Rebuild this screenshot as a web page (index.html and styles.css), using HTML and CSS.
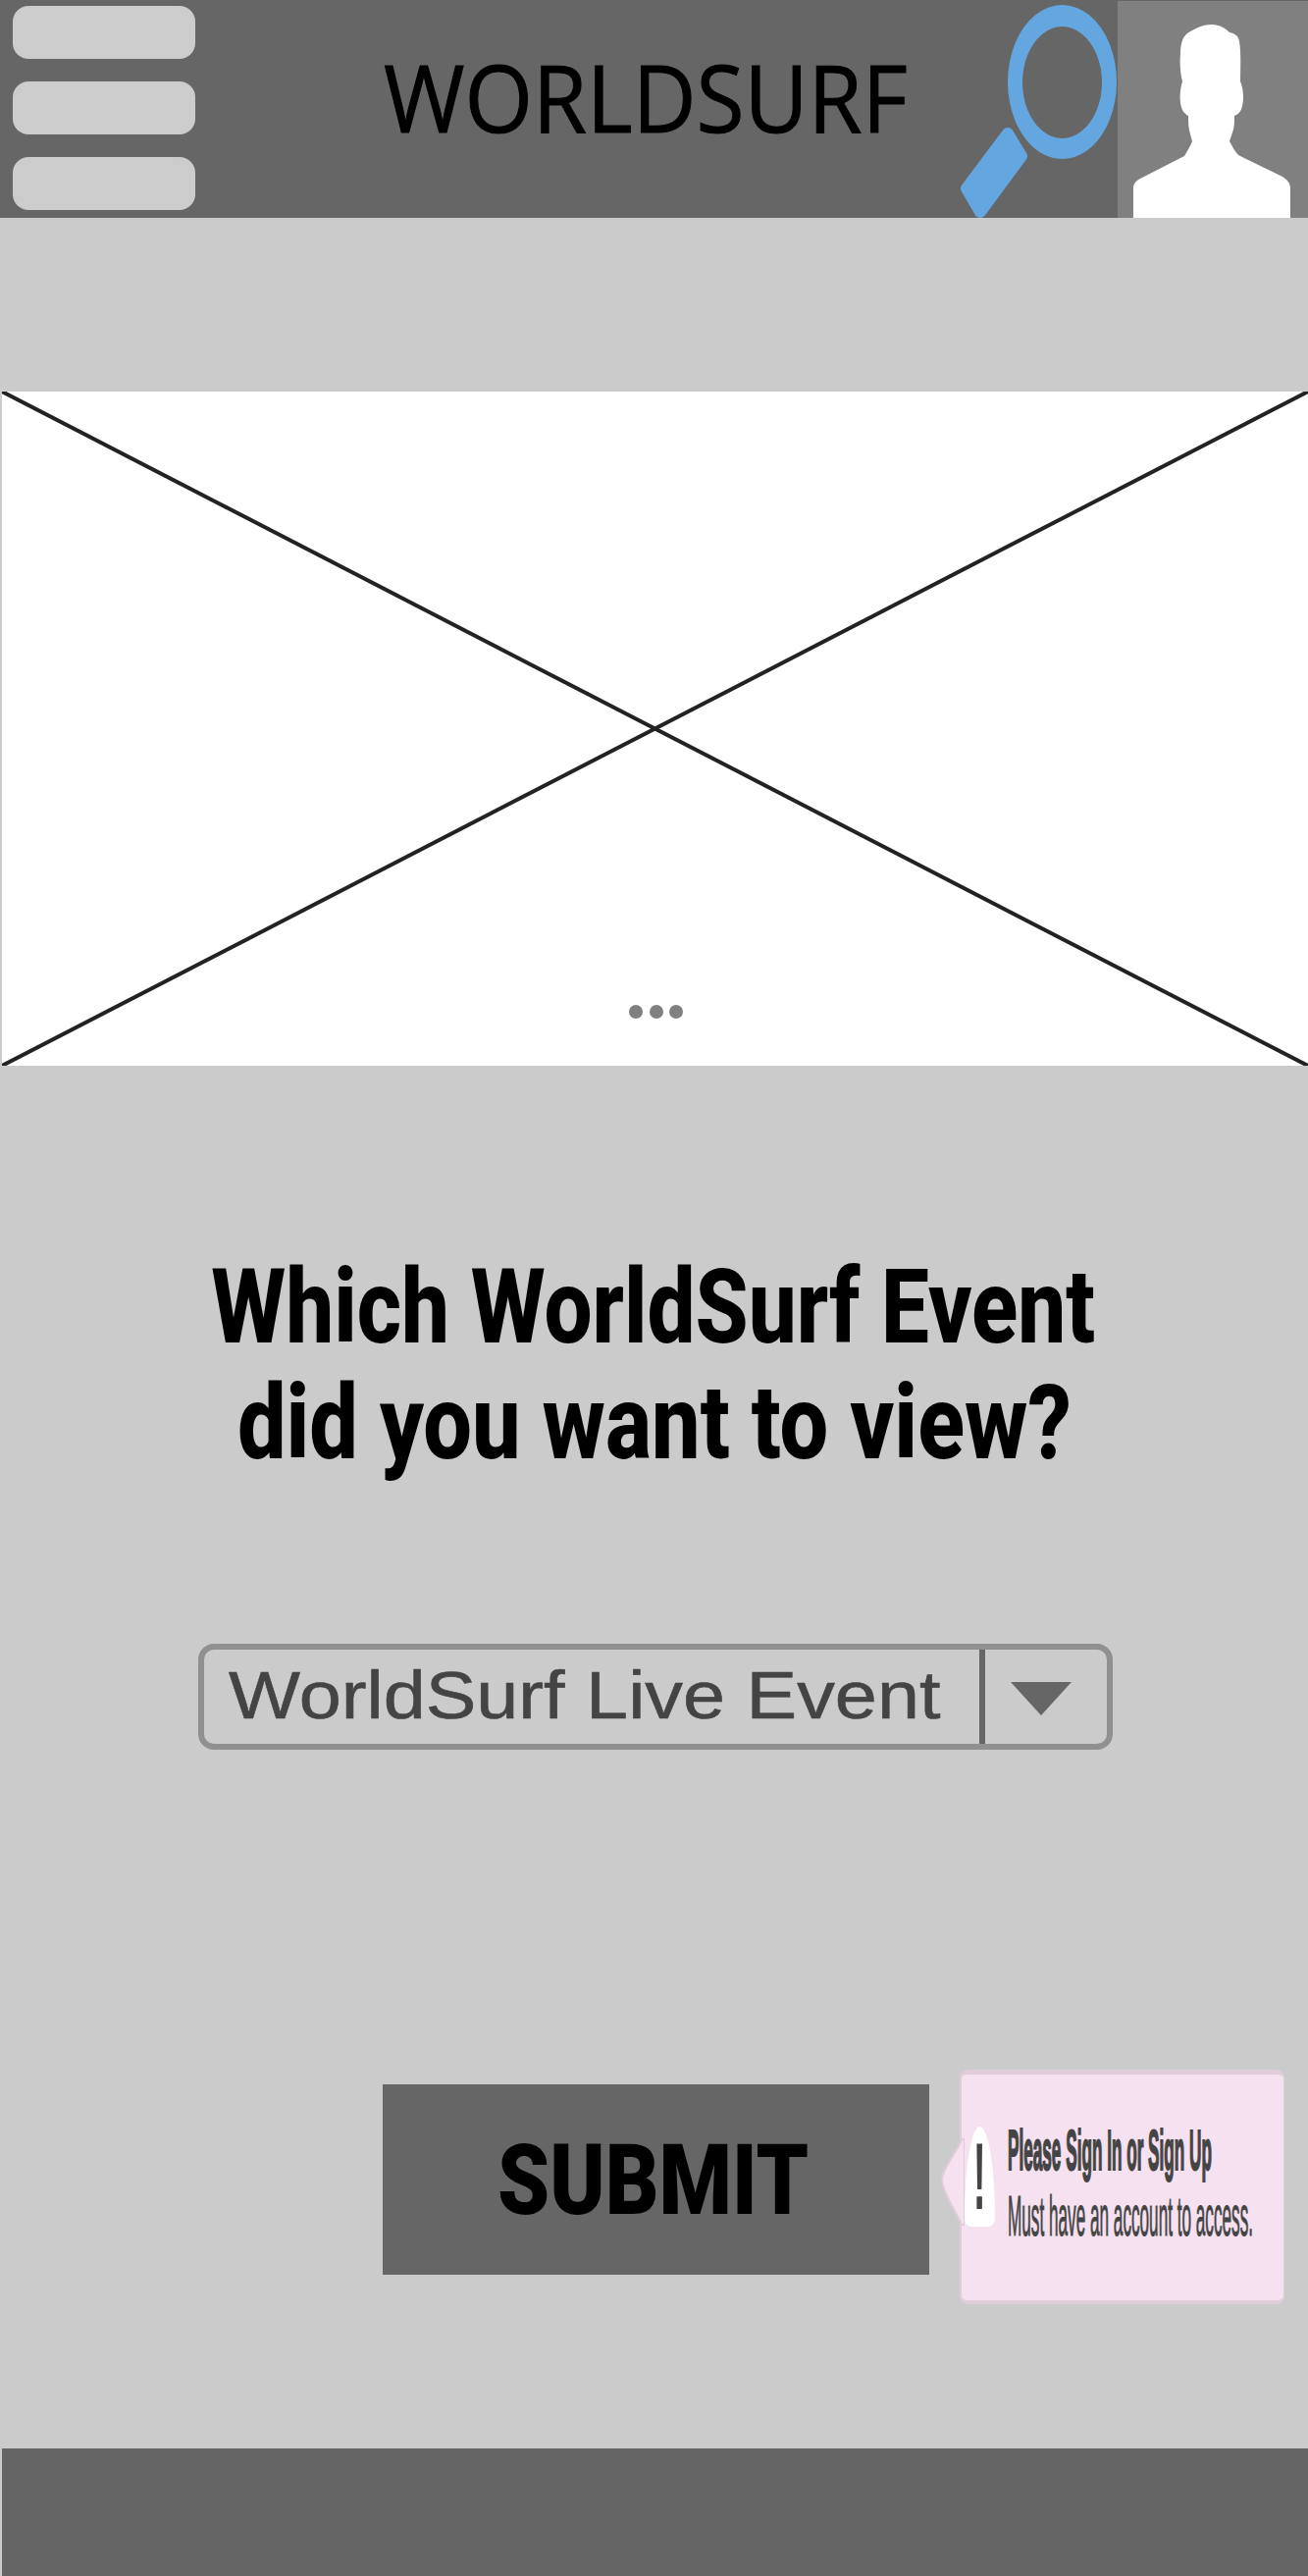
FILE: index.html
```html
<!doctype html>
<html lang="en">
<head>
    <meta charset="utf-8">
    <title>WorldSurf</title>
    <link rel="stylesheet" href="styles.css">
</head>
<body>
    <header class="topbar">
        <div class="menu">
            <span></span>
            <span></span>
            <span></span>
        </div>
        <div class="brand"><h1>WORLDSURF</h1></div>
        <svg class="search" width="169" height="222" viewBox="0 0 169 222">
            <path fill="#64a7e0" fill-rule="evenodd" d="M112.5 5a55.5 78.5 0 1 0 .01 0zM112.5 27a40.5 57 0 1 1-.01 0z"/>
            <path fill="#64a7e0" stroke="#64a7e0" stroke-width="12" stroke-linejoin="round" d="M57 136L71 159L29 216L15 192z"/>
        </svg>
        <div class="avatar">
            <svg width="194" height="221" viewBox="0 1 194 221">
                <path fill="#fff" d="M96 25C104 25 110 29 114 33C119 34 123 36 124 42C126 55 125 70 125 83C128 90 129 100 127 108C126 114 122 117 119 118C119 125 119 130 117 135L114 144C117 149 119 154 123 158L168 180C173 183 176 187 176 192V223H16V192C16 187 19 184 23 182L68 159C71 154 74 149 76 144L73 133C72 128 72 122 72 118C68 116 65 112 64 105C63 97 64 90 66 83C64 75 63 65 64 55C64 45 66 38 71 34C77 30 86 25 96 25z"/>
            </svg>
        </div>
    </header>

    <section class="hero">
        <svg class="hero-cross" viewBox="0 0 1331 687" preserveAspectRatio="none">
            <line x1="0" y1="0" x2="1331" y2="687"/>
            <line x1="1331" y1="0" x2="0" y2="687"/>
        </svg>
        <div class="dots">
            <span></span>
            <span></span>
            <span></span>
        </div>
    </section>

    <h2 class="question">
        <span class="question-top">Which WorldSurf Event</span>
        <span class="question-bottom">did you want to view?</span>
    </h2>

    <div class="select">
        <div class="select-value"><span>WorldSurf Live Event</span></div>
        <div class="select-arrow"></div>
    </div>

    <div class="actions">
        <button class="submit" type="button"><span>SUBMIT</span></button>
        <aside class="alert">
            <svg class="alert-tip" width="24" height="90" viewBox="0 0 24 90">
                <path fill="#f5e1ef" stroke="#e0cdda" stroke-width="2" d="M21 1C18 12 1 30 1 43C1 54 16 76 21 88L24 88V1z"/>
            </svg>
            <div class="alert-mark"><span>!</span></div>
            <div class="alert-text">
                <strong>Please Sign In or Sign Up</strong>
                <p>Must have an account to access.</p>
            </div>
        </aside>
    </div>

    <footer class="footer"></footer>
</body>
</html>
```

FILE: styles.css
```css
/* reset stuff */
html {
    box-sizing: border-box;
}

*, *:before, *:after {
    box-sizing: inherit;
}

body, h1, h2, p {
    margin: 0;
    padding: 0;
    font-weight: normal;
}

/* actual css */
:root {
    --page-color: #cbcbcb;
    --bar-color: #666;
    --text-color: #444;
}

body {
    width: 1333px;
    height: 2625px;
    overflow: hidden;
    display: flex;
    flex-direction: column;
    background-color: var(--page-color);
    font-family: "Liberation Sans", Arial, sans-serif;
}

/* top bar */
.topbar {
    height: 222px;
    flex: none;
    display: flex;
    background-color: var(--bar-color);
}

.menu {
    width: 199px;
    padding: 6px 0 8px 13px;
    display: flex;
    flex-direction: column;
    justify-content: space-between;
}

.menu span {
    width: 186px;
    height: 54px;
    border-radius: 16px;
    background-color: #ccc;
}

.brand {
    width: 771px;
    padding: 0 2px 26px 148px;
    display: flex;
    align-items: center;
    justify-content: center;
}

.brand h1 {
    font-family: "Open Sans", sans-serif;
    font-size: 95px;
    white-space: nowrap;
    color: #000;
    -webkit-text-stroke: 1px #000;
    transform: scaleX(0.94);
}

.search {
    flex: none;
}

.avatar {
    width: 194px;
    margin-top: 1px;
    background-color: #808080;
}

.avatar svg {
    display: block;
}

/* placeholder image */
.hero {
    position: relative;
    height: 687px;
    flex: none;
    margin: 177px 0 0 2px;
    background-color: #fff;
}

.hero-cross {
    position: absolute;
    top: 0;
    left: 0;
    width: 100%;
    height: 100%;
}

.hero-cross line {
    stroke: #222;
    stroke-width: 4;
    vector-effect: non-scaling-stroke;
}

.dots {
    position: absolute;
    top: 625px;
    left: 639px;
    display: flex;
    gap: 6.5px;
}

.dots span {
    width: 14px;
    height: 14px;
    border-radius: 50%;
    background-color: #808080;
}

/* question */
.question {
    margin-top: 188px;
    display: flex;
    flex-direction: column;
    align-items: center;
    font-family: Roboto, sans-serif;
    font-size: 105px;
    font-weight: 800;
    line-height: 118px;
    color: #000;
}

.question span {
    white-space: nowrap;
}

.question-top {
    margin-right: 2px;
    transform: scaleX(0.83);
}

.question-bottom {
    transform: scaleX(0.84);
}

/* select */
.select {
    width: 932px;
    height: 108px;
    margin: 165px 0 0 202px;
    display: flex;
    border: 6px solid #909090;
    border-radius: 16px;
}

.select-value {
    width: 796px;
    padding: 0 0 5px 25px;
    display: flex;
    align-items: center;
    border-right: 6px solid var(--bar-color);
    font-size: 68px;
    color: var(--text-color);
    -webkit-text-stroke: 0.6px var(--text-color);
}

.select-value span {
    white-space: nowrap;
    transform: scaleX(1.138);
    transform-origin: left center;
}

.select-arrow {
    width: 0;
    height: 0;
    margin: 33px 0 0 26px;
    border-style: solid;
    border-width: 34px 31px 0;
    border-color: var(--bar-color) transparent transparent;
}

/* submit and sign in notice */
.actions {
    margin: 326px 0 0 390px;
    display: flex;
    gap: 31px;
}

.submit {
    width: 557px;
    height: 194px;
    margin-top: 15px;
    padding: 0 6px 0 0;
    border: 0;
    background-color: var(--bar-color);
    font-family: Roboto, sans-serif;
    font-size: 100px;
    font-weight: 900;
    color: #000;
}

.submit span {
    display: inline-block;
    transform: scaleX(0.85);
}

.alert {
    position: relative;
    width: 331px;
    height: 239px;
    padding: 53px 0 0 3px;
    display: flex;
    gap: 13px;
    background-color: #f5e1ef;
    border: solid #e0cdda;
    border-width: 5px 1px 4px 2px;
    border-radius: 8px;
}

.alert-tip {
    position: absolute;
    top: 65px;
    left: -21px;
}

.alert-mark {
    width: 31px;
    height: 102px;
    flex: none;
    display: flex;
    align-items: center;
    justify-content: center;
    background-color: #fff;
    border-radius: 50% 50% 20% 20% / 90% 90% 8% 8%;
    font-size: 97px;
    line-height: 102px;
    font-weight: 700;
    color: var(--text-color);
}

.alert-mark span {
    transform: scaleX(0.4);
}

.alert-text {
    width: 260px;
    margin-top: -10px;
    color: var(--text-color);
    font-size: 58px;
    line-height: 67px;
    white-space: nowrap;
}

.alert-text strong, .alert-text p {
    display: block;
    width: max-content;
    transform: scaleX(0.296);
    transform-origin: left center;
}

.alert-text strong {
    -webkit-text-stroke: 2px var(--text-color);
}

.alert-text p {
    -webkit-text-stroke: 1px var(--text-color);
}

/* footer */
.footer {
    flex: 1;
    margin: 147px 0 0 2px;
    background-color: #656565;
}
```
